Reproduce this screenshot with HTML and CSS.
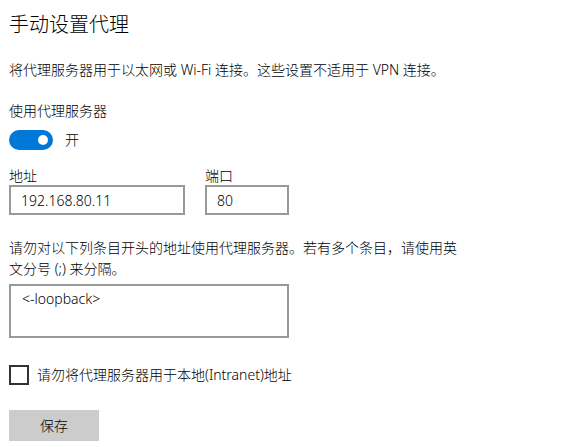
FILE: index.html
```html
<!DOCTYPE html>
<html lang="zh-CN">
    <head>
        <meta charset="UTF-8" />
        <meta name="viewport" content="width=device-width, initial-scale=1.0" />
        <title>代理</title>
        <link rel="stylesheet" href="styles.css">
    </head>

    <body>
        <div class="page">
            <h1 class="title">手动设置代理</h1>
            <p class="desc">将代理服务器用于以太网或 Wi-Fi 连接。这些设置不适用于 VPN 连接。</p>

            <div class="label">使用代理服务器</div>
            <div class="toggle-row">
                <span class="toggle"><span class="knob"></span></span>
                <span>开</span>
            </div>

            <div class="fields">
                <div class="field">
                    <div class="field-name">地址</div>
                    <input class="box addr" type="text" value="192.168.80.11">
                </div>
                <div class="field">
                    <div class="field-name">端口</div>
                    <input class="box port" type="text" value="80">
                </div>
            </div>

            <p class="hint">请勿对以下列条目开头的地址使用代理服务器。若有多个条目，请使用英文分号 (;) 来分隔。</p>
            <textarea class="box list">&lt;-loopback&gt;</textarea>

            <label class="check">
                <input type="checkbox">
                <span>请勿将代理服务器用于本地(Intranet)地址</span>
            </label>

            <button class="save">保存</button>
        </div>
    </body>
</html>
```

FILE: styles.css
```css
html,
body {
    margin: 0;
    padding: 0;
    background: #fff;
}

body {
    color: #000;
    font: 300 14px/20px "Noto Sans", "Noto Sans CJK SC", sans-serif;
}

h1,
p {
    margin: 0;
    padding: 0;
}

.page {
    padding: 11px 9px 0;
    display: flex;
    flex-direction: column;
    align-items: flex-start;
}

.title {
    font-size: 20px;
    font-weight: 300;
    line-height: 28px;
}

.desc {
    margin-top: 21px;
}

.label {
    margin-top: 21px;
}

.toggle-row {
    margin-top: 9px;
    display: flex;
    align-items: center;
    gap: 12px;
}

.toggle {
    width: 44px;
    height: 20px;
    border-radius: 10px;
    background: #0078d7;
    display: flex;
    align-items: center;
    justify-content: flex-end;
    padding-right: 5px;
    box-sizing: border-box;
}

.knob {
    width: 10px;
    height: 10px;
    border-radius: 50%;
    background: #fff;
}

.fields {
    margin-top: 16px;
    display: flex;
    gap: 20px;
}

.field-name {
    line-height: 19px;
}

.box {
    box-sizing: border-box;
    border: 2px solid #999;
    border-radius: 0;
    background: #fff;
    color: #000;
    font: inherit;
    outline: none;
    margin: 0;
}

.addr,
.port {
    display: block;
    height: 30px;
    padding: 0 10px;
}

.addr {
    width: 176px;
}

.port {
    width: 84px;
}

.hint {
    margin-top: 22px;
    max-width: 456px;
    line-height: 21px;
}

.list {
    display: block;
    margin-top: 5px;
    width: 280px;
    height: 54px;
    padding: 3px 11px;
    resize: none;
    line-height: 20px;
}

.check {
    margin-top: 27px;
    display: flex;
    align-items: center;
    gap: 8px;
}

.check input {
    appearance: none;
    width: 20px;
    height: 20px;
    margin: 0;
    border: 2px solid #333;
    box-sizing: border-box;
    background: #fff;
}

.save {
    margin-top: 25px;
    width: 90px;
    height: 31px;
    border: none;
    background: #ccc;
    color: #000;
    font: inherit;
    padding: 0;
}
```
